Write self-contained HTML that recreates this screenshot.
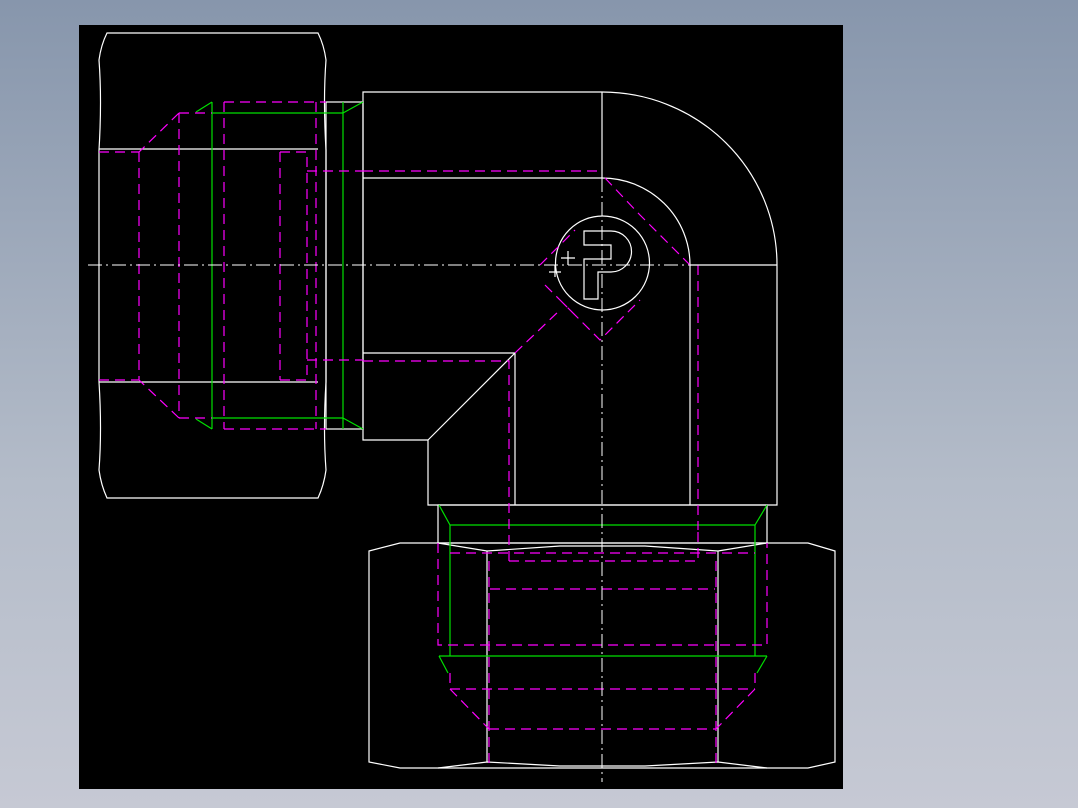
<!DOCTYPE html>
<html><head><meta charset="utf-8"><style>
html,body{margin:0;padding:0;width:1078px;height:808px;overflow:hidden;background:linear-gradient(#8796ac,#b4bcc9 60%,#c6c9d4);}
svg{position:absolute;left:0;top:0}
</style></head><body>
<svg width="1078" height="808" viewBox="0 0 1078 808">
<rect x="79" y="25" width="764" height="764" fill="#000"/>
<g fill="none" stroke="#fff" stroke-width="1.2">
<path d="M107 33 L318 33 Q324 45 326 60 Q323 100 326 150 L326 382 Q323 430 326 470 Q324 485 318 498 L107 498 Q101 485 99 470 Q102 430 99 382 L99 150 Q102 100 99 60 Q101 45 107 33 Z"/>
<line x1="99" y1="149" x2="318" y2="149"/><line x1="99" y1="382" x2="318" y2="382"/>
<rect x="326" y="102" width="37" height="327"/>
<path d="M363 92 L602 92 A175 173 0 0 1 777 265 L777 505 L428 505 L428 440 L363 440 Z"/>
<line x1="602" y1="92" x2="602" y2="178"/>
<path d="M363 178 L602 178 A88 87 0 0 1 690 265 L777 265"/>
<line x1="690" y1="265" x2="690" y2="505"/>
<path d="M363 353 L515 353 L515 505 M515 353 L428 440"/>
<circle cx="602.5" cy="263" r="47"/>
<path d="M584 231 L611 231 A20 20 0 0 1 611 272 L598 272 L598 299 L584 299 L584 259 L611 259 L611 245 L584 245 Z"/>
<path d="M568 251 v14 M561 258 h14 M555 265 v12 M549 272 h12"/>
<rect x="438" y="505" width="329" height="38"/>
<path d="M369 551 L400 543 L808 543 L835 551 L835 762 L808 768 L400 768 L369 762 Z"/>
<path d="M438 543 L487 551 L560 546 L645 546 L718 551 L767 543 M438 768 L487 762 L560 766 L645 766 L718 762 L767 768"/>
<line x1="487" y1="551" x2="487" y2="762"/><line x1="718" y1="551" x2="718" y2="762"/>
</g>
<g fill="none" stroke="#00e000" stroke-width="1.2">
<path d="M212 102 L212 429 M212 113 L343 113 M212 418 L343 418 M343 102 L343 429 M196 112 L212 102 M196 419 L212 429 M343 113 L363 102 M343 418 L363 429"/>
<path d="M450 525 L755 525 M450 525 L450 656 M755 525 L755 656 M439 656 L767 656 M439 505 L450 525 M767 505 L755 525 M439 656 L448 673 M767 656 L757 673"/>
</g>
<g fill="none" stroke="#ff00ff" stroke-width="1.2" stroke-dasharray="10 6">
<path d="M224 102 L326 102 M224 429 L326 429 M224 102 L224 429 M179 113 L212 113 M179 418 L212 418 M179 113 L139 152 M179 418 L139 380 M179 113 L179 418 M99 152 L139 152 M99 380 L139 380 M139 152 L139 380"/>
<path d="M280 152 L307 152 L307 380 L280 380 M280 152 L280 380 M307 171 L363 171 M307 360 L363 360 M316 102 L316 429"/>
<path d="M363 171 L602 171 M363 361 L509 361 L509 561 M698 265 L698 530 M509 561 L698 561 L698 530"/>
<path d="M438 543 L438 645 L767 645 L767 543 M450 553 L755 553 M490 589 L715 589 M450 689 L755 689 M489 729 L716 729 M450 673 L450 689 M755 673 L755 689 M450 689 L489 729 M755 689 L716 729 M489 561 L489 768 M716 561 L716 768"/>
<path d="M605 178 L640 215 L690 265 M515 353 L560 310 M560 300 L600 340 L640 300 M540 265 L575 230 M545 285 L575 315"/>
</g>
<g fill="none" stroke="#fff" stroke-width="1" stroke-dasharray="14 4 2 4">
<line x1="88" y1="265" x2="777" y2="265"/>
<line x1="602" y1="178" x2="602" y2="782"/>
</g>
</svg>
</body></html>
